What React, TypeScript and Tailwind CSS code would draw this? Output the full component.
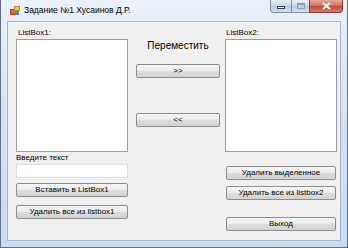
import React from "react";

const font = "font-['Liberation_Sans',Arial,sans-serif]";

const WinButton = ({ label, className = "" }: { label: string; className?: string }) => (
  <div
    className={`h-[14px] w-full rounded-[2px] border border-[#8d8d8d] bg-[linear-gradient(to_bottom,#f6f6f6_0%,#ececec_48%,#dddddd_52%,#d2d2d2_100%)] flex items-center justify-center text-[8px] leading-none text-black ${className}`}
  >
    {label}
  </div>
);

const ListBox = () => <div className="h-[113px] w-full border border-[#9c9c9c] bg-white" />;

const AppIcon = () => (
  <svg width="10" height="10" viewBox="0 0 10 10">
    <rect x="0.5" y="3.5" width="5" height="5" fill="#e8643c" stroke="#b04020" />
    <rect x="4.5" y="0.5" width="5" height="4" fill="#f6c650" stroke="#c08a20" />
    <rect x="5" y="5" width="4" height="4" fill="#4a86d0" />
  </svg>
);

const TitleButtons = () => (
  <div className="ml-auto mr-[4px] flex h-[13px] self-start">
    <div className="w-[22px] h-full rounded-bl-[4px] border border-t-0 border-[#7d8ea6] bg-[linear-gradient(to_bottom,#e8eef6,#c9d6e6_50%,#b7c7dc_50%,#d3e0ee)] flex items-end justify-center pb-[3px]">
      <div className="w-[8px] h-[3px] bg-white border border-[#34404f]" />
    </div>
    <div className="w-[17px] h-full border-b border-[#7d8ea6] bg-[linear-gradient(to_bottom,#e8eef6,#c9d6e6_50%,#b7c7dc_50%,#d3e0ee)] flex items-center justify-center">
      <div className="w-[8px] h-[6px] border border-[#8c9cb0] border-t-2" />
    </div>
    <div className="w-[34px] h-full rounded-br-[4px] border border-t-0 border-[#8a3a34] bg-[linear-gradient(to_bottom,#e8a79b,#d26a5a_50%,#c0453a_50%,#d97a66)] flex items-center justify-center">
      <svg width="9" height="8" viewBox="0 0 9 8">
        <path d="M1 1 L8 7 M8 1 L1 7" stroke="#ffffff" strokeWidth="2" />
      </svg>
    </div>
  </div>
);

export default function App() {
  return (
    <div
      className={`w-[348px] h-[248px] flex flex-col border-x border-b border-[#5f6f86] bg-[linear-gradient(to_bottom,#eaf1f9,#d8e5f4_40%,#c9dcf1)] ${font}`}
    >
      <div className="h-[21px] flex items-center">
        <div className="pl-[9px] flex items-center gap-[4px]">
          <AppIcon />
          <span className="text-[8.5px] leading-none text-black">Задание №1 Хусаинов Д.Р.</span>
        </div>
        <TitleButtons />
      </div>

      <div className="mx-[6px] h-[220px] border border-[#a9b7c8] bg-[#f0f0f0] flex pl-[8px]">
        <div className="w-[112px] flex flex-col">
          <div className="h-[17px] flex items-end pb-[1px] pl-[2px] text-[8px] leading-[10px] text-black">ListBox1:</div>
          <ListBox />
          <div className="h-[12px] flex items-center text-[8px] leading-none text-black">Введите текст</div>
          <div className="h-[14px] w-full border border-[#dcdfe3] bg-white" />
          <WinButton label="Вставить в ListBox1" className="mt-[5px]" />
          <WinButton label="Удалить все из listbox1" className="mt-[8px]" />
        </div>

        <div className="ml-[8px] w-[84px] flex flex-col">
          <div className="mt-[17px] h-[14px] flex items-center justify-center text-[10px] leading-none text-black">
            Переместить
          </div>
          <WinButton label=">>" className="mt-[11px] h-[13px]" />
          <WinButton label="<<" className="mt-[35px] h-[13px]" />
        </div>

        <div className="ml-[5px] w-[112px] flex flex-col">
          <div className="h-[17px] flex items-end pb-[1px] pl-[1px] text-[8px] leading-[10px] text-black">ListBox2:</div>
          <ListBox />
          <div className="px-[1px] flex flex-col">
            <WinButton label="Удалить выделенное" className="mt-[14px]" />
            <WinButton label="Удалить все из listbox2" className="mt-[6px]" />
            <WinButton label="Выход" className="mt-[17px]" />
          </div>
        </div>
      </div>
    </div>
  );
}
